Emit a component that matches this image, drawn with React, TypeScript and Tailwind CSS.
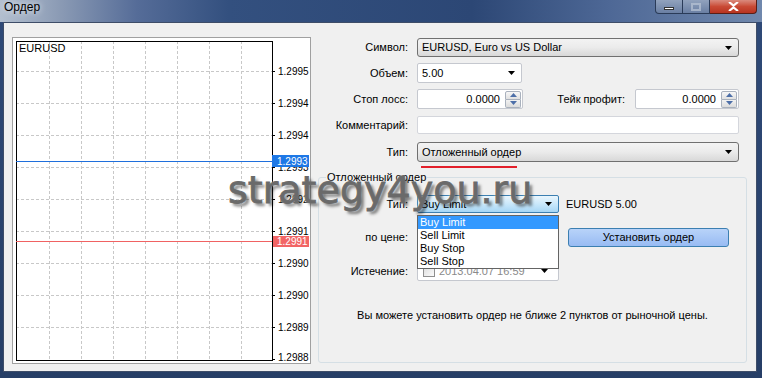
import React from 'react';

const Arrow = ({ up = false, color = '#000' }: { up?: boolean; color?: string }) => (
  <svg width="7" height="4" viewBox="0 0 7 4">
    <path d={up ? 'M0 4h7L3.5 0z' : 'M0 0h7L3.5 4z'} fill={color} />
  </svg>
);

const Spin = () => (
  <div className="flex flex-col w-[16px] h-[17px] mr-[1px]">
    <div className="flex-1 flex items-center justify-center border border-[#a9b1bd] rounded-t-[2px] bg-gradient-to-b from-[#f7f7f7] to-[#e1e1e1]">
      <Arrow up color="#4d6fa8" />
    </div>
    <div className="flex-1 flex items-center justify-center border border-t-0 border-[#a9b1bd] rounded-b-[2px] bg-gradient-to-b from-[#f2f2f2] to-[#dcdcdc]">
      <Arrow color="#4d6fa8" />
    </div>
  </div>
);

const Combo = ({ text }: { text: string }) => (
  <div className="w-[322px] h-full flex items-center justify-between pl-[4px] pr-[6px] border border-[#707070] rounded-[3px] bg-gradient-to-b from-[#f3f3f3] via-[#ebebeb] to-[#d8d8d8]">
    <span>{text}</span>
    <Arrow />
  </div>
);

const Label = ({ w, children }: { w: string; children: React.ReactNode }) => (
  <div className={`${w} text-right shrink-0`}>{children}</div>
);

const TitleBar = () => (
  <div className="h-[22px] flex justify-between items-start bg-[linear-gradient(90deg,#b3bfcf_0%,#8a9ab4_8%,#556c98_18%,#33507f_30%,#2c4775_62%,#4e6896_80%,#7088ad_100%)]">
    <span className="pl-[4px] pt-[1px] text-[12px] text-black [text-shadow:0_0_6px_#fff]">Ордер</span>
    <div className="flex mr-[5px] h-[14px]">
      <div className="w-[28px] h-full flex items-end justify-center pb-[3px] border border-t-0 border-[#2a3b58] rounded-bl-[4px] bg-gradient-to-b from-[#91a2bd] to-[#6a7fa3]">
        <div className="w-[10px] h-[3px] bg-white border border-[#333]" />
      </div>
      <div className="w-[27px] h-full flex items-end justify-center pb-[2px] border border-t-0 border-l-0 border-[#2a3b58] bg-gradient-to-b from-[#91a2bd] to-[#6a7fa3]">
        <div className="w-[10px] h-[8px] border-2 border-[#b9c4d6] opacity-70" />
      </div>
      <div className="w-[47px] h-full flex items-center justify-center border border-t-0 border-l-0 border-[#5a1e16] rounded-br-[4px] bg-gradient-to-b from-[#d98a7d] via-[#c94a35] to-[#b83320]">
        <svg width="11" height="9" viewBox="0 0 11 9">
          <path d="M1 0l4.5 3.5L10 0M1 9l4.5-3.5L10 9" stroke="#fff" strokeWidth="2.2" fill="none" />
        </svg>
      </div>
    </div>
  </div>
);

const vx = [36, 68, 100, 132, 164, 196, 228];
const rows: [number, string][] = [
  [33, '1.2995'],
  [65, '1.2994'],
  [97, '1.2994'],
  [129, '1.2993'],
  [161, '1.2992'],
  [193, '1.2991'],
  [225, '1.2990'],
  [257, '1.2990'],
  [289, '1.2989'],
];

const ChartPanel = () => (
  <div className="ml-[8px] mt-[14px] w-[299px] h-[327px] border border-[#a0a0a0] bg-white shrink-0">
    <svg width="297" height="325" className="block" shapeRendering="crispEdges">
      {vx.map((x) => (
        <line key={x} x1={x + 0.5} y1={3} x2={x + 0.5} y2={322} stroke="#c8c8c8" strokeDasharray="3 2" />
      ))}
      {rows.map(([y]) => (
        <line key={y} x1={3} y1={y + 0.5} x2={259} y2={y + 0.5} stroke="#c8c8c8" strokeDasharray="3 2" />
      ))}
      <rect x={3.5} y={3.5} width={256} height={319} fill="none" stroke="#000" />
      {rows.map(([y, t]) => (
        <g key={'l' + y}>
          <line x1={259} y1={y + 0.5} x2={262} y2={y + 0.5} stroke="#000" />
          <text x={265} y={y + 4} fontSize="10" fontFamily="Liberation Sans, Arial, sans-serif" fill="#000">
            {t}
          </text>
        </g>
      ))}
      <line x1={259} y1={321.5} x2={262} y2={321.5} stroke="#000" />
      <text x={265} y={323} fontSize="10" fontFamily="Liberation Sans, Arial, sans-serif" fill="#000">
        1.2988
      </text>
      <text x={6} y={14} fontSize="11" fontFamily="Liberation Sans, Arial, sans-serif" fill="#000">
        EURUSD
      </text>
      <line x1={3} y1={123.5} x2={259} y2={123.5} stroke="#1f6fdc" />
      <rect x={259} y={117} width={37} height={12} fill="#1e78e6" />
      <text x={264} y={127} fontSize="10" fontFamily="Liberation Sans, Arial, sans-serif" fill="#fff">
        1.2993
      </text>
      <line x1={3} y1={203.5} x2={259} y2={203.5} stroke="#f06262" />
      <rect x={260} y={198} width={36} height={11} fill="#f26565" />
      <text x={264} y={207} fontSize="10" fontFamily="Liberation Sans, Arial, sans-serif" fill="#fff">
        1.2991
      </text>
    </svg>
  </div>
);

const OrderForm = () => (
  <div className="flex-1 flex flex-col pt-[15px]">
    <div className="flex items-center h-[19px]">
      <Label w="w-[97px]">Символ:</Label>
      <div className="ml-[9px] h-full">
        <Combo text="EURUSD, Euro vs US Dollar" />
      </div>
    </div>

    <div className="flex items-center h-[20px] mt-[6px]">
      <Label w="w-[97px]">Объем:</Label>
      <div className="ml-[9px] w-[105px] h-full flex items-center justify-between pl-[4px] pr-[6px] bg-white border border-[#c5c8cf] rounded-[2px]">
        <span>5.00</span>
        <Arrow />
      </div>
    </div>

    <div className="flex items-center h-[20px] mt-[6px]">
      <Label w="w-[97px]">Стоп лосс:</Label>
      <div className="ml-[9px] w-[106px] h-full flex items-center justify-end bg-white border border-[#c5c8cf] rounded-[2px]">
        <span className="mr-[5px]">0.0000</span>
        <Spin />
      </div>
      <Label w="w-[102px]">Тейк профит:</Label>
      <div className="ml-[10px] w-[104px] h-full flex items-center justify-end bg-white border border-[#c5c8cf] rounded-[2px]">
        <span className="mr-[5px]">0.0000</span>
        <Spin />
      </div>
    </div>

    <div className="flex items-center h-[18px] mt-[7px]">
      <Label w="w-[97px]">Комментарий:</Label>
      <div className="ml-[9px] w-[322px] h-full bg-white border border-[#d4d6dc] rounded-[2px]" />
    </div>

    <div className="flex items-center h-[20px] mt-[8px]">
      <Label w="w-[97px]">Тип:</Label>
      <div className="ml-[9px] h-full">
        <Combo text="Отложенный ордер" />
      </div>
    </div>

    <div className="ml-[110px] mt-[4px] w-[96px] h-[2px] bg-[#e3202b]" />

    <div className="relative ml-[7px] mt-[9px] w-[429px] h-[186px] border border-[#d5dfe5] rounded-[3px] flex flex-col">
      <span className="absolute -top-[7px] left-[7px] px-[1px] leading-[13px] bg-[#f0f0f0]">Отложенный ордер</span>

      <div className="flex items-center h-[18px] mt-[17px]">
        <Label w="w-[89px]">Тип:</Label>
        <div className="relative ml-[9px] w-[142px] h-full">
          <div className="h-full flex items-center justify-between pl-[3px] pr-[6px] border border-[#3c7fb1] rounded-[2px] bg-gradient-to-b from-[#eaf6fd] via-[#c9e8fb] to-[#a6d6f5]">
            <span>Buy Limit</span>
            <Arrow />
          </div>
          <div className="absolute top-[20px] left-0 w-[142px] z-10 bg-white border border-[#646464] flex flex-col">
            <span className="leading-[13px] pl-[2px] bg-[#3399ff] text-white">Buy Limit</span>
            <span className="leading-[13px] pl-[2px]">Sell Limit</span>
            <span className="leading-[13px] pl-[2px]">Buy Stop</span>
            <span className="leading-[13px] pl-[2px]">Sell Stop</span>
          </div>
        </div>
        <span className="ml-[7px]">EURUSD 5.00</span>
      </div>

      <div className="flex items-center h-[18px] mt-[15px]">
        <Label w="w-[89px]">по цене:</Label>
        <div className="ml-[9px] w-[142px] h-full bg-white border border-[#c5c8cf] rounded-[2px]" />
        <div className="ml-[9px] w-[161px] h-[19px] flex items-center justify-center border border-[#3c7fb1] rounded-[3px] bg-gradient-to-b from-[#b8d3f9] to-[#98bbf3]">
          Установить ордер
        </div>
      </div>

      <div className="flex items-center h-[20px] mt-[15px]">
        <Label w="w-[89px]">Истечение:</Label>
        <div className="ml-[9px] w-[142px] h-full flex items-center bg-white border border-[#c5c8cf] rounded-[2px] pl-[5px] pr-[10px]">
          <div className="w-[12px] h-[12px] border border-[#8f8f8f] bg-gradient-to-br from-[#dcdcdc] to-[#fbfbfb]" />
          <span className="ml-[4px] text-[#8a8a8a] flex-1">2013.04.07 16:59</span>
          <Arrow />
        </div>
      </div>

      <div className="mt-[28px] text-center leading-[13px]">
        Вы можете установить ордер не ближе 2 пунктов от рыночной цены.
      </div>
    </div>
  </div>
);

export default function App() {
  return (
    <div className="relative w-[762px] h-[378px] overflow-hidden flex flex-col bg-[linear-gradient(180deg,#2f4a78,#263e66)] font-['Liberation_Sans',Arial,sans-serif] text-[11px] leading-[13px] text-black">
      <TitleBar />
      <div className="flex-1 ml-[3px] mr-[5px] mb-[6px] flex bg-[#f0f0f0] border border-[#3e4d68]">
        <ChartPanel />
        <OrderForm />
      </div>
      <div className="absolute left-[228px] top-[171px] pointer-events-none font-['DejaVu_Sans',sans-serif] text-[38px] leading-[38px] text-[#6a6a6a] [-webkit-text-stroke:0.8px_#6a6a6a] [text-shadow:3px_3px_3px_rgba(0,0,0,0.5),0_0_3px_rgba(255,255,255,0.9)]">
        strategy4you.ru
      </div>
    </div>
  );
}
